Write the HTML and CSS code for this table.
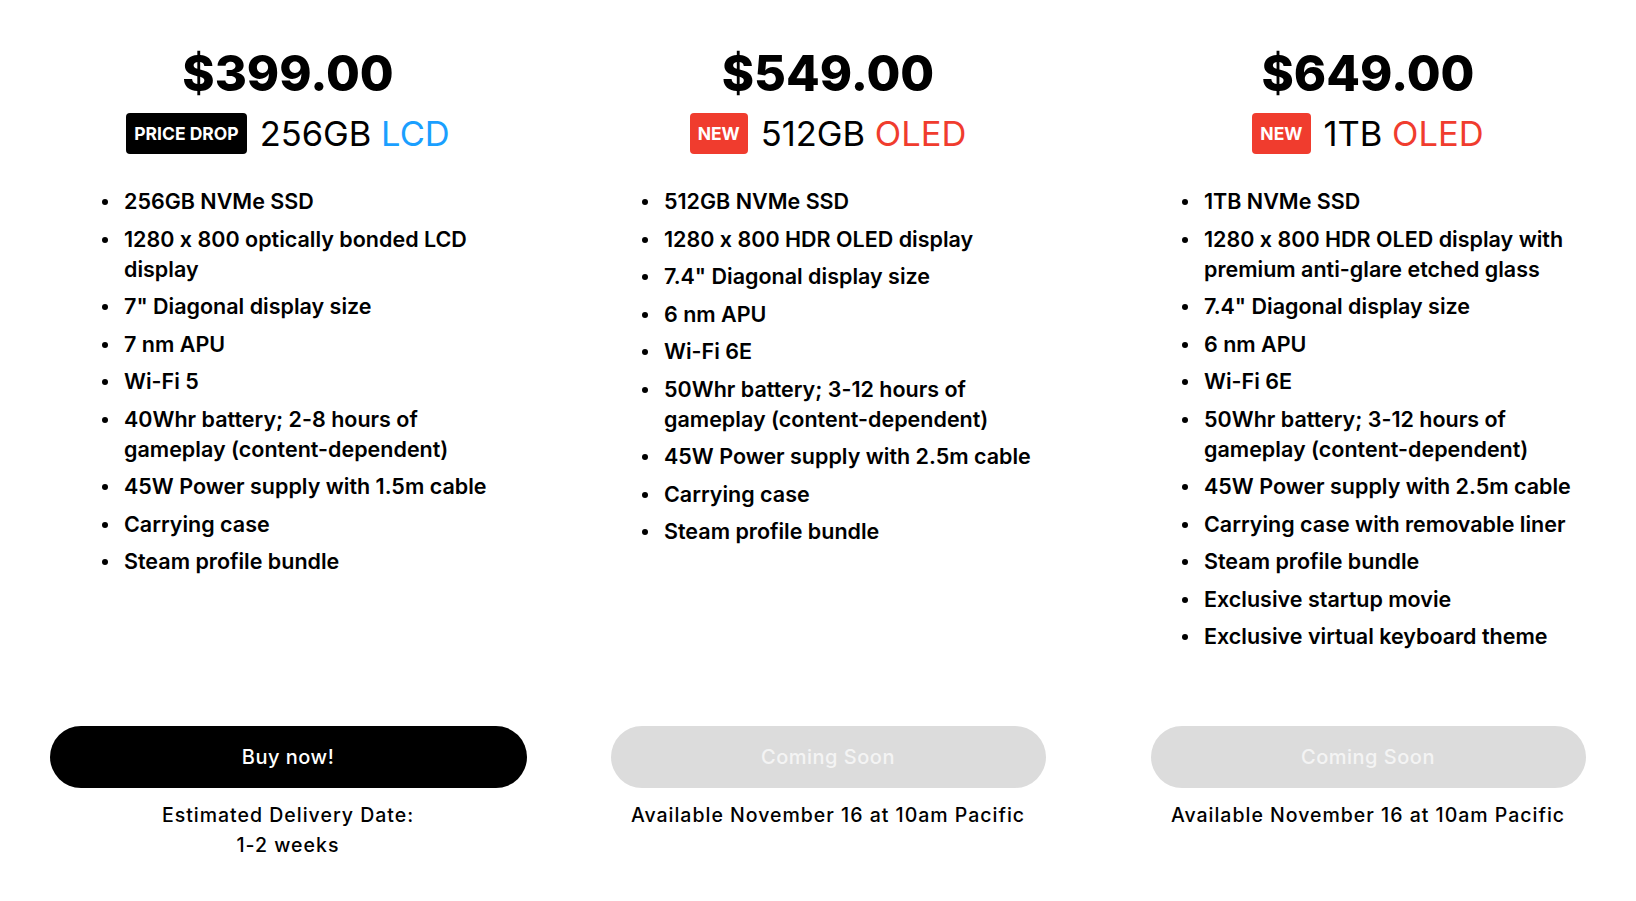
FILE: index.html
```html
<!DOCTYPE html>
<html lang="en">
<head>
<meta charset="utf-8">
<title>Steam Deck models</title>
<link rel="stylesheet" href="styles.css">
</head>
<body>
<main class="plans">
  <section class="plan">
    <div class="price">$399.00</div>
    <div class="model">
      <span class="badge badge-dark">PRICE DROP</span>
      <span class="model-name">256GB <span class="lcd">LCD</span></span>
    </div>
    <ul class="features">
      <li>256GB NVMe SSD</li>
      <li>1280 x 800 optically bonded LCD display</li>
      <li>7" Diagonal display size</li>
      <li>7 nm APU</li>
      <li>Wi-Fi 5</li>
      <li>40Whr battery; 2-8 hours of gameplay (content-dependent)</li>
      <li>45W Power supply with 1.5m cable</li>
      <li>Carrying case</li>
      <li>Steam profile bundle</li>
    </ul>
    <button class="btn btn-buy" type="button">Buy now!</button>
    <p class="note">Estimated Delivery Date:<br>1-2 weeks</p>
  </section>

  <section class="plan">
    <div class="price">$549.00</div>
    <div class="model">
      <span class="badge badge-red">NEW</span>
      <span class="model-name">512GB <span class="oled">OLED</span></span>
    </div>
    <ul class="features">
      <li>512GB NVMe SSD</li>
      <li>1280 x 800 HDR OLED display</li>
      <li>7.4" Diagonal display size</li>
      <li>6 nm APU</li>
      <li>Wi-Fi 6E</li>
      <li>50Whr battery; 3-12 hours of gameplay (content-dependent)</li>
      <li>45W Power supply with 2.5m cable</li>
      <li>Carrying case</li>
      <li>Steam profile bundle</li>
    </ul>
    <button class="btn btn-soon" type="button" disabled>Coming Soon</button>
    <p class="note">Available November 16 at 10am Pacific</p>
  </section>

  <section class="plan">
    <div class="price">$649.00</div>
    <div class="model">
      <span class="badge badge-red">NEW</span>
      <span class="model-name">1TB <span class="oled">OLED</span></span>
    </div>
    <ul class="features">
      <li>1TB NVMe SSD</li>
      <li>1280 x 800 HDR OLED display with premium anti-glare etched glass</li>
      <li>7.4" Diagonal display size</li>
      <li>6 nm APU</li>
      <li>Wi-Fi 6E</li>
      <li>50Whr battery; 3-12 hours of gameplay (content-dependent)</li>
      <li>45W Power supply with 2.5m cable</li>
      <li>Carrying case with removable liner</li>
      <li>Steam profile bundle</li>
      <li>Exclusive startup movie</li>
      <li>Exclusive virtual keyboard theme</li>
    </ul>
    <button class="btn btn-soon" type="button" disabled>Coming Soon</button>
    <p class="note">Available November 16 at 10am Pacific</p>
  </section>
</main>
</body>
</html>
```

FILE: styles.css
```css
html, body {
  margin: 0;
  padding: 0;
  background: #ffffff;
}

body {
  font-family: "Inter", "Noto Sans", "Liberation Sans", sans-serif;
  font-feature-settings: "calt" 0;
  color: #000000;
}

.plans {
  display: grid;
  grid-template-columns: repeat(3, 540px);
  grid-template-rows: auto auto 1fr auto auto;
  padding: 44px 0 0 18px;
}

.plan {
  display: grid;
  grid-row: span 5;
  grid-template-rows: subgrid;
  justify-items: center;
}

.price {
  font-size: 49px;
  font-weight: 800;
  line-height: 60px;
}

.model {
  display: flex;
  align-items: center;
  gap: 13px;
  margin-top: 9px;
  height: 41px;
}

.badge {
  display: flex;
  align-items: center;
  height: 41px;
  padding: 0 8px;
  border-radius: 4px;
  color: #ffffff;
  font-size: 17.5px;
  font-weight: 700;
}

.badge-dark {
  background: #000000;
}

.badge-red {
  background: #f03c2e;
}

.model-name {
  font-size: 34.5px;
  font-weight: 400;
  line-height: 41px;
}

.lcd {
  color: #1a9fff;
}

.oled {
  color: #f03c2e;
}

.features {
  list-style: none;
  justify-self: start;
  margin: 32px 0 67px 84px;
  padding: 0;
  width: 408px;
}

.features li {
  display: flex;
  align-items: flex-start;
  font-size: 21.5px;
  font-weight: 560;
  line-height: 30px;
  margin-bottom: 7.5px;
}

.features li::before {
  content: "";
  flex: none;
  width: 6px;
  height: 6px;
  border-radius: 50%;
  background: #000000;
  margin: 13px 16px 0 0;
}

.btn {
  width: 435px;
  height: 62px;
  border: none;
  border-radius: 31px;
  font-family: inherit;
  font-size: 20px;
  font-weight: 500;
  letter-spacing: 0.5px;
}

.btn-buy {
  width: 477px;
  background: #000000;
  color: #ffffff;
}

.btn-soon {
  background: #dcdcdc;
  color: #f4f4f4;
}

.note {
  margin: 12px 0 0;
  font-size: 19.5px;
  font-weight: 500;
  line-height: 30px;
  letter-spacing: 1px;
  text-align: center;
}
```
